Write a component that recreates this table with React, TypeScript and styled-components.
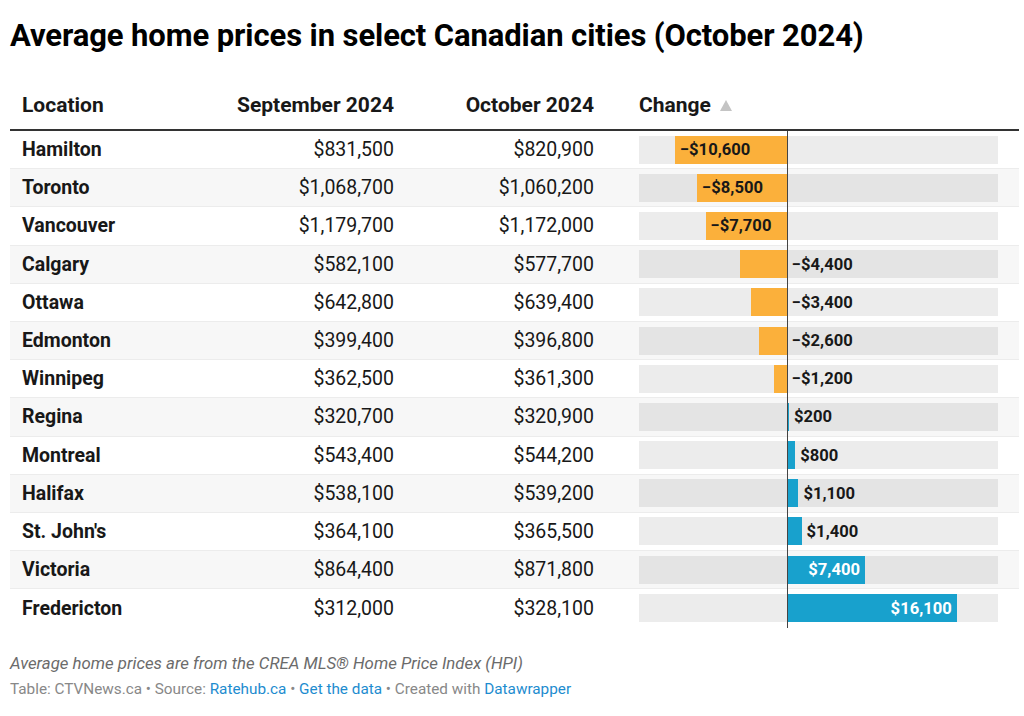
import React from "react";
import styled, { createGlobalStyle } from "styled-components";

const GlobalStyle = createGlobalStyle`
  html, body { margin: 0; padding: 0; background: #ffffff; }
  body { font-family: Roboto, "Liberation Sans", Arial, sans-serif; color: #181818; }
`;

type Row = { name: string; sep: string; oct: string; change: number };

const rows: Row[] = [
  { name: "Hamilton", sep: "$831,500", oct: "$820,900", change: -10600 },
  { name: "Toronto", sep: "$1,068,700", oct: "$1,060,200", change: -8500 },
  { name: "Vancouver", sep: "$1,179,700", oct: "$1,172,000", change: -7700 },
  { name: "Calgary", sep: "$582,100", oct: "$577,700", change: -4400 },
  { name: "Ottawa", sep: "$642,800", oct: "$639,400", change: -3400 },
  { name: "Edmonton", sep: "$399,400", oct: "$396,800", change: -2600 },
  { name: "Winnipeg", sep: "$362,500", oct: "$361,300", change: -1200 },
  { name: "Regina", sep: "$320,700", oct: "$320,900", change: 200 },
  { name: "Montreal", sep: "$543,400", oct: "$544,200", change: 800 },
  { name: "Halifax", sep: "$538,100", oct: "$539,200", change: 1100 },
  { name: "St. John's", sep: "$364,100", oct: "$365,500", change: 1400 },
  { name: "Victoria", sep: "$864,400", oct: "$871,800", change: 7400 },
  { name: "Fredericton", sep: "$312,000", oct: "$328,100", change: 16100 },
];

const MIN = -14000;
const MAX = 20000;
const TRACK = 359;
const scale = (v: number) => (v / (MAX - MIN)) * TRACK;
const ZERO = scale(-MIN);

const fmt = (v: number) =>
  (v < 0 ? "\u2212$" : "$") + Math.abs(v).toLocaleString("en-US");

const Page = styled.div`
  width: 1024px;
  padding: 18px 0 0 0;
  box-sizing: border-box;
`;

const Title = styled.h1`
  margin: 0 0 0 10px;
  font-size: 31px;
  line-height: 36px;
  font-weight: 700;
  color: #000;
  letter-spacing: -0.1px;
  white-space: nowrap;
`;

const Table = styled.div`
  margin: 36px 5px 0 10px;
`;

const Grid = `
  display: grid;
  grid-template-columns: 192px 180px 200px 45px 359px 21px;
  padding-left: 12px;
  align-items: center;
`;

const HeadRow = styled.div`
  ${Grid};
  box-sizing: border-box;
  height: 41px;
  padding-top: 3px;
  align-items: start;
  border-bottom: 2px solid #333;
`;

const HeadCell = styled.div<{ $right?: boolean }>`
  display: flex;
  align-items: center;
  justify-content: ${(p) => (p.$right ? "flex-end" : "flex-start")};
  font-size: 21px;
  line-height: 24px;
  font-weight: 700;
  color: #181818;
  white-space: nowrap;
`;

const SortArrow = styled.svg`
  margin-left: 9px;
  margin-top: 1px;
  flex: none;
`;

const BodyRow = styled.div<{ $alt: boolean }>`
  ${Grid};
  height: 38.2px;
  box-sizing: border-box;
  border-bottom: 1px solid #ececec;
  background: ${(p) => (p.$alt ? "#f7f7f7" : "#ffffff")};
  &:last-child { border-bottom: none; }
`;

const NameCell = styled.div`
  font-size: 19.5px;
  font-weight: 700;
  color: #181818;
  white-space: nowrap;
`;

const NumCell = styled.div`
  font-size: 19.5px;
  font-weight: 400;
  color: #181818;
  text-align: right;
  white-space: nowrap;
`;

const BarCell = styled.div`
  position: relative;
  height: 100%;
  display: flex;
  align-items: center;
`;

const Track = styled.div`
  position: relative;
  width: 100%;
  height: 28px;
  background: rgba(0, 0, 0, 0.075);
`;

const Bar = styled.div<{ $neg: boolean }>`
  position: absolute;
  top: 0;
  bottom: 0;
  background: ${(p) => (p.$neg ? "#fbb03b" : "#18a1cd")};
`;

const BarLabel = styled.div<{ $white?: boolean }>`
  position: absolute;
  top: 0;
  bottom: 0;
  display: flex;
  align-items: center;
  font-size: 16.6px;
  font-weight: 700;
  color: ${(p) => (p.$white ? "#ffffff" : "#181818")};
  white-space: nowrap;
`;

const ZeroLine = styled.div`
  position: absolute;
  top: 0;
  bottom: -1px;
  width: 1px;
  background: #444;
`;

const Footer = styled.div`
  margin: 24px 0 0 10px;
`;

const Notes = styled.div`
  font-size: 16.8px;
  line-height: 24px;
  font-style: italic;
  color: #6b6b6b;
`;

const Byline = styled.div`
  margin-top: 4px;
  font-size: 15.3px;
  line-height: 20px;
  color: #888888;
`;

const Link = styled.span`
  color: #1d8ccf;
`;

function ChangeBar({ v }: { v: number }) {
  const w = scale(Math.abs(v));
  const neg = v < 0;
  const left = neg ? ZERO - w : ZERO;
  const inside = w > 75;
  let label: React.ReactNode;
  if (neg) {
    label = inside ? (
      <BarLabel style={{ left: left + 5 }}>{fmt(v)}</BarLabel>
    ) : (
      <BarLabel style={{ left: ZERO + 5 }}>{fmt(v)}</BarLabel>
    );
  } else {
    label = inside ? (
      <BarLabel $white style={{ right: TRACK - (ZERO + w) + 5 }}>
        {fmt(v)}
      </BarLabel>
    ) : (
      <BarLabel style={{ left: ZERO + w + 5 }}>{fmt(v)}</BarLabel>
    );
  }
  return (
    <BarCell>
      <Track>
        <Bar $neg={neg} style={{ left, width: Math.max(w, 1.5) }} />
        {label}
      </Track>
      <ZeroLine style={{ left: ZERO }} />
    </BarCell>
  );
}

export default function App() {
  return (
    <>
      <GlobalStyle />
      <Page>
        <Title>Average home prices in select Canadian cities (October 2024)</Title>
        <Table>
          <HeadRow>
            <HeadCell>Location</HeadCell>
            <HeadCell $right>September 2024</HeadCell>
            <HeadCell $right>October 2024</HeadCell>
            <div />
            <HeadCell>
              Change
              <SortArrow width="12" height="11" viewBox="0 0 12 11">
                <path d="M6 0 L12 11 L0 11 Z" fill="#c4c4c4" />
              </SortArrow>
            </HeadCell>
            <div />
          </HeadRow>
          {rows.map((r, i) => (
            <BodyRow key={r.name} $alt={i % 2 === 1}>
              <NameCell>{r.name}</NameCell>
              <NumCell>{r.sep}</NumCell>
              <NumCell>{r.oct}</NumCell>
              <div />
              <ChangeBar v={r.change} />
              <div />
            </BodyRow>
          ))}
        </Table>
        <Footer>
          <Notes>Average home prices are from the CREA MLS® Home Price Index (HPI)</Notes>
          <Byline>
            Table: CTVNews.ca • Source: <Link>Ratehub.ca</Link> • <Link>Get the data</Link> •
            Created with <Link>Datawrapper</Link>
          </Byline>
        </Footer>
      </Page>
    </>
  );
}
